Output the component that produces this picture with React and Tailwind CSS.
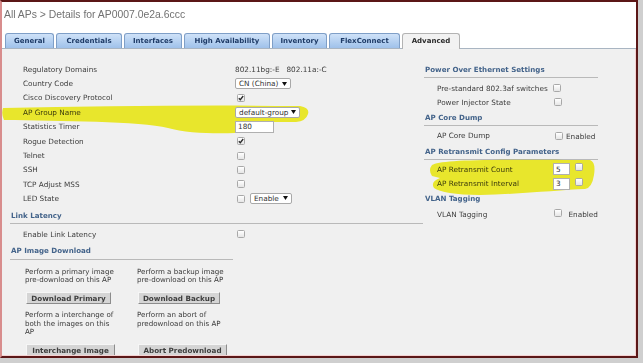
import React from "react";

function Check({ checked = false, className = "" }) {
  return (
    <span className={`relative z-10 inline-flex items-center justify-center w-[8px] h-[8px] border border-[#a8a8a8] rounded-[1.5px] bg-gradient-to-b from-white to-[#e6e6e6] ${className}`}>
      {checked && (
        <svg width="6" height="6" viewBox="0 0 6 6" className="block">
          <path d="M0.8 3.2 L2.3 4.7 L5.2 1.0" stroke="#2a2a2a" strokeWidth="1.3" fill="none" />
        </svg>
      )}
    </span>
  );
}

function Arrow() {
  return (
    <svg width="5" height="4" viewBox="0 0 5 4" className="block">
      <path d="M0 0 L5 0 L2.5 4 Z" fill="#111" />
    </svg>
  );
}

function Select({ text, w }) {
  return (
    <span className={`relative z-10 inline-flex items-center justify-between h-[11px] ${w} pl-[3px] pr-[3px] bg-white border border-[#a8a8a8] rounded-[2px] text-[#333]`}>
      <span className="leading-[9px]">{text}</span>
      <Arrow />
    </span>
  );
}

function Input({ text, w }) {
  return (
    <span className={`relative z-10 inline-flex items-center h-[12px] ${w} pl-[2px] bg-white border border-[#b0b0b0] text-[#333]`}>
      <span className="leading-[9px]">{text}</span>
    </span>
  );
}

function LRow({ label, children }) {
  return (
    <div className="flex items-center h-[14.4px]">
      <div className="w-[225px] pl-[13px] text-[#3c3c3c] leading-[9px]">{label}</div>
      <div className="flex items-center">{children}</div>
    </div>
  );
}

function RRow({ label, children, h = "h-[14px]" }) {
  return (
    <div className={`flex items-center ${h}`}>
      <div className="w-[129px] pl-[13px] text-[#3c3c3c] leading-[9px]">{label}</div>
      <div className="flex items-center">{children}</div>
    </div>
  );
}

function Header({ text, className = "", line = true }) {
  return (
    <div className={`${line ? "pb-[3px] border-b border-[#b9b9b9]" : ""} ${className}`}>
      <div className="pl-[1px] leading-[9px] font-bold text-[#43638a] text-[7.1px]">{text}</div>
    </div>
  );
}

function Btn({ children, w }) {
  return (
    <div className={`ml-[1px] ${w} h-[11.5px] flex items-center justify-center bg-[#d5d5d5] border border-t-[#f6f6f6] border-l-[#f6f6f6] border-b-[#8c8c8c] border-r-[#8c8c8c] font-bold text-[#3e3e3e] text-[7.2px] leading-[9px]`}>
      {children}
    </div>
  );
}

const tabs = [
  ["General", "w-[49px]"],
  ["Credentials", "w-[66px]"],
  ["Interfaces", "w-[58px]"],
  ["High Availability", "w-[86px]"],
  ["Inventory", "w-[55px]"],
  ["FlexConnect", "w-[71px]"],
];

export default function App() {
  return (
    <div className="relative w-[643px] h-[363px] bg-[#cfcfcf] overflow-hidden font-['DejaVu_Sans',Verdana,sans-serif] text-[7.3px]">
      <div className="w-[638px] h-[358px] border-t-2 border-r-2 border-b-2 border-[#5b1717] border-l-2 border-l-[#d88d8d] bg-white flex flex-col">
        <div className="h-[31px] pl-[2px] pt-[7px] font-['Liberation_Sans',Arial,sans-serif] text-[10.4px] leading-[12px] text-[#717171]">
          All APs &gt; Details for AP0007.0e2a.6ccc
        </div>
        <div className="h-[16px] flex items-end gap-[2px] pl-[3px] border-b border-[#a9b5c2]">
          {tabs.map(([t, w]) => (
            <div
              key={t}
              className={`${w} h-[15px] flex items-center justify-center rounded-t-[3px] border border-b-0 border-[#7f9fc7] bg-gradient-to-b from-[#cfe2f8] to-[#9fc1ea] font-bold text-[7px] text-[#1d3a66] leading-[9px]`}
            >
              {t}
            </div>
          ))}
          <div className="w-[58px] h-[16px] -mb-px flex items-center justify-center rounded-t-[3px] border border-b-0 border-[#b3b3b3] bg-[#f2f2f2] font-bold text-[7px] text-[#2b2b2b] leading-[9px]">
            Advanced
          </div>
        </div>
        <div className="flex-1 bg-[#f0f0f0] border-r border-b border-[#f4d2d2] flex overflow-hidden">
          <div className="w-[420px] pl-[8px] pt-[13px]">
            <LRow label="Regulatory Domains">
              <span className="text-[#3c3c3c] leading-[9px]">802.11bg:-E&nbsp;&nbsp;&nbsp;802.11a:-C</span>
            </LRow>
            <LRow label="Country Code">
              <Select text="CN (China)" w="w-[56px]" />
            </LRow>
            <LRow label="Cisco Discovery Protocol">
              <Check checked className="ml-[2px]" />
            </LRow>
            <LRow label="AP Group Name">
              <Select text="default-group" w="w-[65px]" />
            </LRow>
            <LRow label="Statistics Timer">
              <Input text="180" w="w-[39px]" />
            </LRow>
            <LRow label="Rogue Detection">
              <Check checked className="ml-[2px]" />
            </LRow>
            <LRow label="Telnet">
              <Check className="ml-[2px]" />
            </LRow>
            <LRow label="SSH">
              <Check className="ml-[2px]" />
            </LRow>
            <LRow label="TCP Adjust MSS">
              <Check className="ml-[2px]" />
            </LRow>
            <LRow label="LED State">
              <Check className="ml-[2px]" />
              <span className="ml-[5px]">
                <Select text="Enable" w="w-[42px]" />
              </span>
            </LRow>
            <Header text="Link Latency" className="w-[413px] pt-[5px]" />
            <div className="mt-[3px]">
              <LRow label="Enable Link Latency">
                <Check className="ml-[2px]" />
              </LRow>
            </div>
            <Header text="AP Image Download" className="w-[223px] pt-[5px] pb-[4px]" />
            <div className="grid grid-cols-[112px_112px] gap-y-[7.5px] pl-[15px] pt-[7.5px] text-[#3a3a3a] leading-[8.5px] text-[7.1px]">
              <div>Perform a primary image<br />pre-download on this AP</div>
              <div>Perform a backup image<br />pre-download on this AP</div>
              <Btn w="w-[85px]">Download Primary</Btn>
              <Btn w="w-[82px]">Download Backup</Btn>
              <div>Perform a interchange of<br />both the images on this<br />AP</div>
              <div>Perform an abort of<br />predownload on this AP</div>
              <Btn w="w-[89px]">Interchange Image</Btn>
              <Btn w="w-[89px]">Abort Predownload</Btn>
            </div>
          </div>
          <div className="flex-1 pl-[2px] pt-[15.5px]">
            <div className="w-[174px]">
              <Header text="Power Over Ethernet Settings" />
              <div className="mt-[3.5px]">
                <RRow label="Pre-standard 802.3af switches">
                  <Check />
                </RRow>
                <RRow label="Power Injector State">
                  <Check className="ml-[1px]" />
                </RRow>
              </div>
              <Header text="AP Core Dump" className="mt-[3.5px]" />
              <div className="mt-[3px]">
                <RRow label="AP Core Dump">
                  <Check className="ml-[2px]" />
                  <span className="ml-[3px] leading-[9px] text-[#3c3c3c] translate-y-[1px]">Enabled</span>
                </RRow>
              </div>
              <Header text="AP Retransmit Config Parameters" className="mt-[4px]" />
              <div className="mt-[2.5px]">
                <RRow label="AP Retransmit Count" h="h-[14.4px]">
                  <Input text="5" w="w-[17px]" />
                  <Check className="ml-[5px] -translate-y-[2px]" />
                </RRow>
                <RRow label="AP Retransmit Interval" h="h-[14.4px]">
                  <Input text="3" w="w-[17px]" />
                  <Check className="ml-[5px] -translate-y-[2px]" />
                </RRow>
              </div>
              <Header text="VLAN Tagging" line={false} className="mt-[3.7px]" />
              <div className="mt-[4px]">
                <RRow label="VLAN Tagging">
                  <Check className="ml-[2px] -translate-y-[1px]" />
                  <span className="ml-[7px] leading-[9px] text-[#3c3c3c]">Enabled</span>
                </RRow>
              </div>
            </div>
          </div>
        </div>
      </div>
      <svg className="absolute left-0 top-0 z-[5] pointer-events-none mix-blend-multiply" width="643" height="363">
        <path
          d="M3,108 C100,106 200,105 300,106 Q310,108 308,114 Q306,121 296,122 L274,122 L273,121 L236,121 L235,133 C215,134 185,133 168,128 C140,121 60,121 4,120 Q1,114 3,108 Z"
          fill="#f7f52e"
        />
        <path
          d="M432,165 C440,160 480,159 590,160 Q596,162 594,175 Q592,188 585,189 C560,190 520,194 480,195 C455,195 440,192 434,188 Q430,182 440,178 L432,176 Q428,170 432,165 Z"
          fill="#f7f52e"
        />
      </svg>
    </div>
  );
}
